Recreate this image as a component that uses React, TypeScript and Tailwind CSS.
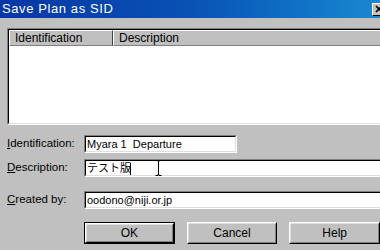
import React from 'react';

const font = { fontFamily: '"Liberation Sans", Arial, "Noto Sans CJK JP", sans-serif' };

const Sunken = ({ className = '', children }: { className?: string; children?: React.ReactNode }) => (
  <div className={`border border-t-[#808080] border-l-[#808080] border-b-white border-r-white ${className}`}>
    <div className="h-full border border-t-black border-l-black border-b-[#dfdfdf] border-r-[#dfdfdf] bg-white">
      {children}
    </div>
  </div>
);

const Field = ({ label, hot, value, className = '' }: { label: string; hot: string; value: string; className?: string }) => (
  <div className={`flex items-center ${className}`}>
    <div className="w-[84px] pl-[7px] text-[11.5px] text-black">
      <span className="underline">{hot}</span>
      {label}
    </div>
    <Sunken className="h-[18px] flex-1">
      <div className="px-[1px] text-[11px] leading-[14px] whitespace-pre">{value}</div>
    </Sunken>
  </div>
);

const Button = ({ label, isDefault = false }: { label: string; isDefault?: boolean }) => (
  <div className={`h-[22px] w-[92px] ${isDefault ? 'border border-black' : ''}`}>
    <div className="h-full border border-t-white border-l-white border-b-black border-r-black">
      <div className="flex h-full items-center justify-center border border-t-[#dfdfdf] border-l-[#dfdfdf] border-b-[#808080] border-r-[#808080] text-[12px]">
        {label}
      </div>
    </div>
  </div>
);

export default function App() {
  return (
    <div className="relative flex h-[250px] w-[380px] flex-col overflow-hidden bg-[#c0c0c0]" style={font}>
      <div className="flex h-[18px] shrink-0 items-center bg-gradient-to-r from-[#0836a6] via-[#0a52b4] to-[#1a88d2] pl-[2px] text-[13px] tracking-[0.6px] text-white">
        Save Plan as SID
        <div className="ml-auto mr-[-6px] mt-[1px] h-[13px] w-[14px] border border-t-white border-l-white border-b-black border-r-black bg-[#c0c0c0]">
          <svg width="12" height="11" viewBox="0 0 12 11">
            <path d="M3 2l6 6M9 2l-6 6" stroke="black" strokeWidth="1.6" />
          </svg>
        </div>
      </div>

      <Sunken className="ml-[7px] mr-[-10px] mt-[10px] h-[97px] shrink-0">
        <div className="flex h-[16px] bg-[#c0c0c0] text-[12px] text-black">
          <div className="w-[104px] shrink-0 border border-t-white border-l-white border-b-[#808080] border-r-[#404040] pl-[5px] leading-[14px]">
            Identification
          </div>
          <div className="flex-1 border border-t-white border-l-white border-b-[#808080] pl-[5px] leading-[14px]">
            Description
          </div>
        </div>
      </Sunken>

      <Field label="dentification:" hot="I" value="Myara 1  Departure" className="mt-[10px] w-[237px]" />
      <Field label="escription:" hot="D" value="テスト版" className="mr-[-10px] mt-[6px]" />
      <Field label="reated by:" hot="C" value="oodono@niji.or.jp" className="mr-[-10px] mt-[14px]" />

      <div className="ml-[84px] mt-[13px] flex gap-[12px]">
        <Button label="OK" isDefault />
        <Button label="Cancel" />
        <Button label="Help" />
      </div>

      <div className="absolute left-[130px] top-[163px] h-[12px] w-[1px] bg-black" />
      <svg className="absolute left-[155px] top-[160px]" width="7" height="16" viewBox="0 0 7 16">
        <path d="M0.5 0.5h2.5v1M6.5 0.5h-2.5v1M3.5 1v14M0.5 15.5h2.5v-1M6.5 15.5h-2.5v-1" stroke="black" strokeWidth="1" fill="none" />
      </svg>
    </div>
  );
}
